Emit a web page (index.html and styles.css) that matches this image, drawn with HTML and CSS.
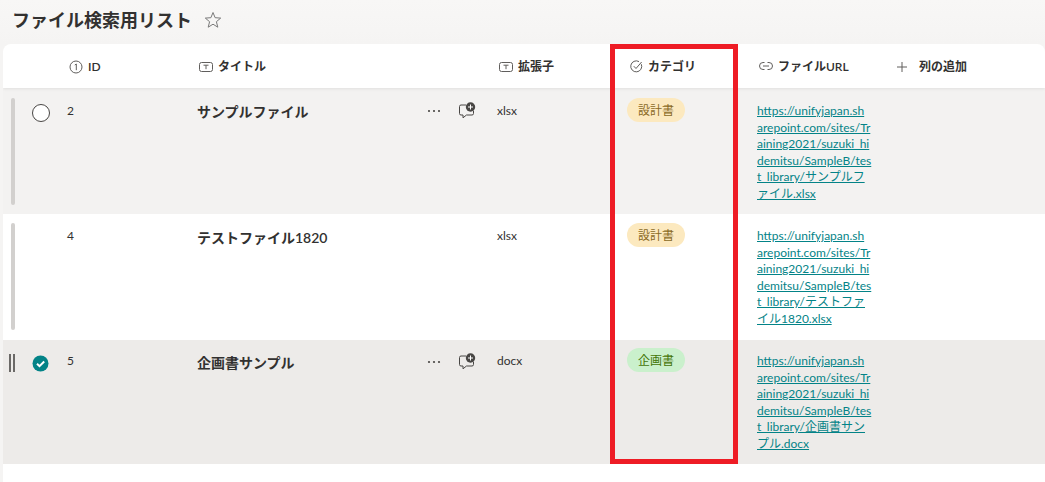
FILE: index.html
```html
<!DOCTYPE html>
<html lang="ja">
<head>
    <meta charset="UTF-8">
    <title>ファイル検索用リスト</title>
    <link rel="stylesheet" href="styles.css">
</head>
<body>
    <div class="page-title">
        <h1>ファイル検索用リスト</h1>
        <svg class="star" width="18" height="18" viewBox="0 0 18 18"><path d="M9 1.5l2.1 5.2 5.6.4-4.3 3.6 1.4 5.5L9 13.2l-4.8 3 1.4-5.5-4.3-3.6 5.6-.4z" fill="none" stroke="#7a7a7a" stroke-width="1"/></svg>
    </div>

    <div class="list">
        <div class="row head">
            <div></div>
            <div class="col-head"><svg width="14" height="14" viewBox="0 0 14 14"><circle cx="7" cy="7" r="6" fill="none" stroke="#605e5c"/><path d="M5.800 5l1.500-1v6.200" fill="none" stroke="#605e5c"/></svg>ID</div>
            <div class="col-head"><svg width="14" height="14" viewBox="0 0 14 14"><rect x=".5" y="2.500" width="13" height="9" rx="2" fill="none" stroke="#605e5c"/><path d="M4.500 5.200h5M7 5.200v4" fill="none" stroke="#605e5c"/></svg>タイトル</div>
            <div class="col-head"><svg width="14" height="14" viewBox="0 0 14 14"><rect x=".5" y="2.500" width="13" height="9" rx="2" fill="none" stroke="#605e5c"/><path d="M4.500 5.200h5M7 5.200v4" fill="none" stroke="#605e5c"/></svg>拡張子</div>
            <div class="col-head"><svg class="icon-up" width="13" height="13" viewBox="0 0 13 13"><path d="M11.300 4.200A5.500 5.500 0 1 1 9 1.600" fill="none" stroke="#605e5c"/><path d="M3.800 6.200l2.200 2.300 5.600-6.500" fill="none" stroke="#605e5c"/></svg>カテゴリ</div>
            <div class="col-head"><svg class="icon-up" width="14" height="14" viewBox="0 0 14 14"><path d="M5.500 3.500H4a3.500 3.500 0 0 0 0 7h1.500M8.500 3.500H10a3.500 3.500 0 0 1 0 7H8.500M4 7h6" fill="none" stroke="#605e5c"/></svg>ファイルURL</div>
            <div class="col-head head-add"><svg width="12" height="12" viewBox="0 0 12 12"><path d="M6 1v10M1 6h10" fill="none" stroke="#605e5c"/></svg>列の追加</div>
        </div>

        <div class="row item item-hover">
            <div class="select"><span class="grip"></span><span class="radio"></span></div>
            <div class="cell-id">2</div>
            <div class="cell-title">
                <span>サンプルファイル</span>
                <div class="actions">
                    <svg width="14" height="4" viewBox="0 0 14 4"><circle cx="2" cy="2" r="1.100" fill="#484644"/><circle cx="7" cy="2" r="1.100" fill="#484644"/><circle cx="12" cy="2" r="1.100" fill="#484644"/></svg>
                    <svg width="18" height="18" viewBox="0 0 18 18"><path d="M8 3H3a1.500 1.500 0 0 0-1.500 1.500v7A1.500 1.500 0 0 0 3 13h2v2.800L8.500 13H14a1.500 1.500 0 0 0 1.500-1.500V9" fill="none" stroke="#484644"/><circle cx="12.500" cy="5" r="4.700" fill="#484644"/><path d="M12.500 2.500v5M10 5h5" stroke="#fff"/></svg>
                </div>
            </div>
            <div class="cell-text">xlsx</div>
            <div><span class="pill pill-design">設計書</span></div>
            <a class="cell-url" href="#">https://unifyjapan.sh<br>arepoint.com/sites/Tr<br>aining2021/suzuki_hi<br>demitsu/SampleB/tes<br>t_library/サンプルフ<br>ァイル.xlsx</a>
        </div>

        <div class="row item item-plain">
            <div class="select"><span class="grip"></span></div>
            <div class="cell-id">4</div>
            <div class="cell-title"><span>テストファイル1820</span></div>
            <div class="cell-text">xlsx</div>
            <div><span class="pill pill-design">設計書</span></div>
            <a class="cell-url" href="#">https://unifyjapan.sh<br>arepoint.com/sites/Tr<br>aining2021/suzuki_hi<br>demitsu/SampleB/tes<br>t_library/テストファ<br>イル1820.xlsx</a>
        </div>

        <div class="row item item-selected">
            <div class="select"><span class="grip grip-active"></span>
                <svg class="check" width="17" height="17" viewBox="0 0 17 17"><circle cx="8.500" cy="8.500" r="8" fill="#038387"/><path d="M5 8.800l2.500 2.400 4.700-4.700" fill="none" stroke="#fff" stroke-width="2"/></svg>
            </div>
            <div class="cell-id">5</div>
            <div class="cell-title">
                <span>企画書サンプル</span>
                <div class="actions">
                    <svg width="14" height="4" viewBox="0 0 14 4"><circle cx="2" cy="2" r="1.100" fill="#484644"/><circle cx="7" cy="2" r="1.100" fill="#484644"/><circle cx="12" cy="2" r="1.100" fill="#484644"/></svg>
                    <svg width="18" height="18" viewBox="0 0 18 18"><path d="M8 3H3a1.500 1.500 0 0 0-1.500 1.500v7A1.500 1.500 0 0 0 3 13h2v2.800L8.500 13H14a1.500 1.500 0 0 0 1.500-1.500V9" fill="none" stroke="#484644"/><circle cx="12.500" cy="5" r="4.700" fill="#484644"/><path d="M12.500 2.500v5M10 5h5" stroke="#fff"/></svg>
                </div>
            </div>
            <div class="cell-text">docx</div>
            <div><span class="pill pill-plan">企画書</span></div>
            <a class="cell-url" href="#">https://unifyjapan.sh<br>arepoint.com/sites/Tr<br>aining2021/suzuki_hi<br>demitsu/SampleB/tes<br>t_library/企画書サン<br>プル.docx</a>
        </div>
    </div>

    <div class="red-frame"></div>
</body>
</html>
```

FILE: styles.css
```css
body {
    margin: 0;
    height: 482px;
    overflow: hidden;
    background: linear-gradient(#f8f7f6, #f5f4f3 44px);
    font-family: "Lato", "Noto Sans CJK JP", sans-serif;
    color: #323130;
}

.page-title {
    display: flex;
    align-items: center;
    gap: 13px;
    height: 44px;
    padding-left: 12px;
    box-sizing: border-box;
    padding-bottom: 4px;
}

    .page-title h1 {
        margin: 0;
        font-size: 18px;
        font-weight: 600;
        line-height: 24px;
    }

.star {
    margin-left: -1px;
}

.list {
    margin-left: 3px;
    height: 438px;
    background: #fff;
    border-radius: 8px 8px 0 0;
    overflow: hidden;
}

.row {
    display: grid;
    grid-template-columns: 64px 130px 300px 130px 130px 1fr;
}

.head {
    height: 44px;
    padding-top: 2px;
    box-sizing: border-box;
    align-items: center;
    grid-template-columns: 66px 130px 300px 131px 129px 137px 1fr;
    box-shadow: 0 1px 3px rgba(0, 0, 0, 0.08);
    position: relative;
}

.col-head {
    display: flex;
    align-items: center;
    gap: 5px;
    font-size: 12px;
    font-weight: 600;
    line-height: 16px;
    white-space: nowrap;
}

    .col-head svg {
        flex: none;
    }

.icon-up {
    margin-top: -2px;
}

.head-add {
    gap: 11px;
}

.item {
    height: 126px;
    box-sizing: border-box;
    padding-top: 10px;
    font-size: 12px;
}

.item-hover {
    background: #f3f2f1;
}

.item-plain {
    padding-top: 9px;
}

.item-selected {
    height: 124px;
    padding-top: 8px;
    background: #edebe9;
}

.select {
    position: relative;
}

.grip {
    position: absolute;
    left: 8px;
    top: 0;
    width: 4px;
    height: 107px;
    background: #d2d0ce;
    border-radius: 2px;
}

.grip-active {
    left: 6px;
    top: 6px;
    width: 2px;
    height: 18px;
    border-radius: 0;
    background: #6b6967;
    box-shadow: 4px 0 0 #6b6967;
}

.radio {
    position: absolute;
    left: 29px;
    top: 6px;
    width: 16px;
    height: 16px;
    border: 1px solid #484644;
    border-radius: 50%;
    background: #fff;
}

.check {
    position: absolute;
    left: 29px;
    top: 7px;
}

.cell-id,
.cell-text {
    line-height: 16px;
    padding-top: 5px;
}

.cell-title {
    display: flex;
    justify-content: space-between;
    align-items: center;
    align-self: start;
    height: 28px;
    margin-top: -1px;
    padding-right: 21px;
    font-size: 14px;
    font-weight: 600;
}

.item-plain .cell-title,
.item-selected .cell-title {
    margin-top: 0;
}

.actions {
    display: flex;
    align-items: center;
    gap: 17px;
}

.pill {
    display: inline-block;
    vertical-align: top;
    width: 58px;
    height: 24px;
    border-radius: 12px;
    text-align: center;
    font-size: 12px;
    line-height: 25px;
}

.pill-design {
    background: #fce9bf;
    color: #8a6a1f;
}

.pill-plan {
    background: #caf0cc;
    color: #437406;
}

.cell-url {
    padding-top: 5px;
    font-size: 12px;
    line-height: 16.500px;
    color: #038387;
    white-space: nowrap;
}

.red-frame {
    position: absolute;
    left: 610px;
    top: 44px;
    width: 118px;
    height: 410px;
    border: 5px solid #ee1c25;
}
```
